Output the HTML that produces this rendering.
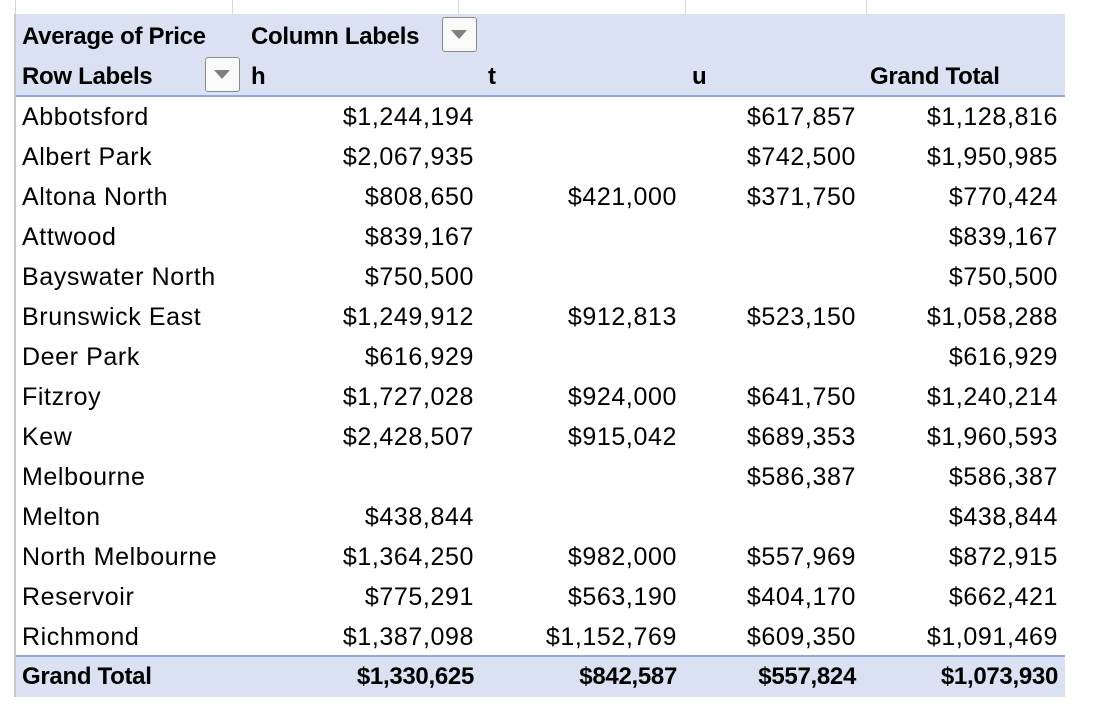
<!DOCTYPE html>
<html><head><meta charset="utf-8"><style>
body{margin:0;width:1096px;height:726px;background:#fff;position:relative;overflow:hidden;font-family:"Liberation Sans",sans-serif;color:#000}
.band{position:absolute;left:16px;width:1049px;background:#d9e1f2}
.t{position:absolute;font-size:25px;line-height:40px;height:40px;white-space:nowrap;letter-spacing:0.6px}
.b{font-weight:bold;letter-spacing:-0.3px;font-size:24px}
.r{text-align:right}
.btn{position:absolute;width:35px;height:35px;border:1.5px solid #8a8a8a;border-radius:3px;background:#fafafa;box-sizing:border-box}
.btn:after{content:"";position:absolute;left:8px;top:12px;border-left:8px solid transparent;border-right:8px solid transparent;border-top:9px solid #7f7f7f}
.tick{position:absolute;top:0;width:1px;height:14px;background:#d8d8d8}
</style></head><body>
<div class="tick" style="left:15px"></div><div class="tick" style="left:232px"></div><div class="tick" style="left:458px"></div><div class="tick" style="left:685px"></div><div class="tick" style="left:866px"></div>
<div style="position:absolute;left:14px;top:14px;width:2px;height:683px;background:#c8c8c8"></div>
<div class="band" style="top:14px;height:81px"></div>
<div style="position:absolute;left:16px;top:95px;width:1049px;height:2px;background:#8eaadb"></div>
<div class="band" style="top:657px;height:40px"></div>
<div style="position:absolute;left:16px;top:655px;width:1049px;height:2px;background:#8eaadb"></div>
<div class="btn" style="left:442px;top:17px"></div>
<div class="btn" style="left:205px;top:57px"></div>
<div id="c"></div>
<script>
const rows=[["Abbotsford","$1,244,194","","$617,857","$1,128,816"],["Albert Park","$2,067,935","","$742,500","$1,950,985"],["Altona North","$808,650","$421,000","$371,750","$770,424"],["Attwood","$839,167","","","$839,167"],["Bayswater North","$750,500","","","$750,500"],["Brunswick East","$1,249,912","$912,813","$523,150","$1,058,288"],["Deer Park","$616,929","","","$616,929"],["Fitzroy","$1,727,028","$924,000","$641,750","$1,240,214"],["Kew","$2,428,507","$915,042","$689,353","$1,960,593"],["Melbourne","","","$586,387","$586,387"],["Melton","$438,844","","","$438,844"],["North Melbourne","$1,364,250","$982,000","$557,969","$872,915"],["Reservoir","$775,291","$563,190","$404,170","$662,421"],["Richmond","$1,387,098","$1,152,769","$609,350","$1,091,469"]];
const R=[474,677,856,1058];let h='';
h+='<div class="t b" style="left:22px;top:17px">Average of Price</div><div class="t b" style="left:251px;top:17px">Column Labels</div>';
h+='<div class="t b" style="left:22px;top:57px">Row Labels</div><div class="t b" style="left:251px;top:57px">h</div><div class="t b" style="left:488px;top:57px">t</div><div class="t b" style="left:692px;top:57px">u</div><div class="t b" style="left:870px;top:57px">Grand Total</div>';
function row(a,y,cls){h+=`<div class="t ${cls}" style="left:22px;top:${y}px">${a[0]}</div>`;for(let i=0;i<4;i++)if(a[i+1])h+=`<div class="t r ${cls}" style="right:${1096-R[i]}px;top:${y}px">${a[i+1]}</div>`;}
rows.forEach((a,i)=>row(a,97+40*i,''));
row(["Grand Total","$1,330,625","$842,587","$557,824","$1,073,930"],657,'b');
document.getElementById('c').innerHTML=h;
</script>
</body></html>
